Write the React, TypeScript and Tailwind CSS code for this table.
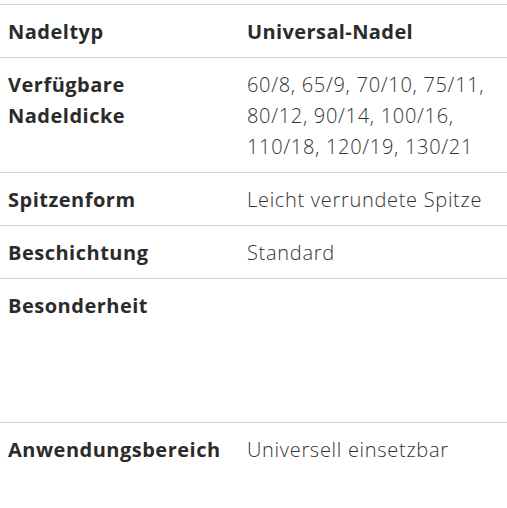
import React from 'react';

const rows: { label: React.ReactNode; value: React.ReactNode; bold?: boolean; tall?: boolean }[] = [
  { label: 'Nadeltyp', value: 'Universal-Nadel', bold: true },
  {
    label: (
      <>
        Verfügbare
        <br />
        Nadeldicke
      </>
    ),
    value: '60/8, 65/9, 70/10, 75/11, 80/12, 90/14, 100/16, 110/18, 120/19, 130/21',
  },
  { label: 'Spitzenform', value: 'Leicht verrundete Spitze' },
  { label: 'Beschichtung', value: 'Standard' },
  { label: 'Besonderheit', value: '', tall: true },
  { label: 'Anwendungsbereich', value: 'Universell einsetzbar' },
];

export default function App() {
  return (
    <div className="w-[507px] h-[508px] bg-white pt-1 text-[#2b2b2b] text-[20px] leading-[31px] font-['Open_Sans',sans-serif]">
      {rows.map((row, i) => (
        <div key={i} className={`flex border-t border-[#d2d2d2] pt-[11px] pb-[10px] ${row.tall ? 'h-[144px]' : ''}`}>
          <div className="w-[247px] shrink-0 pl-2 pr-3 font-bold tracking-[0.5px]">{row.label}</div>
          <div
            className={`w-[252px] ${row.bold ? 'font-bold tracking-[0.4px]' : 'font-light tracking-[0.7px] text-[#333]'}`}
          >
            {row.value}
          </div>
        </div>
      ))}
    </div>
  );
}
